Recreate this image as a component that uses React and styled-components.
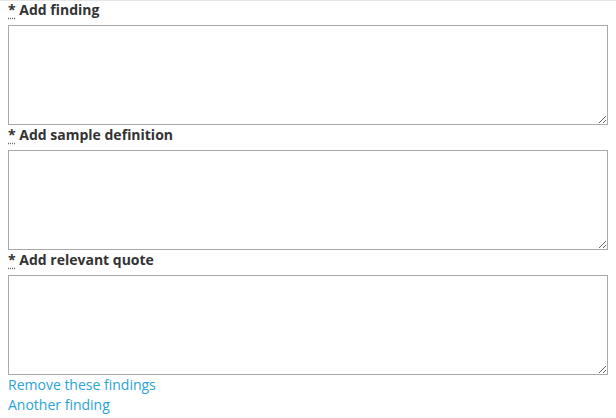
import styled, { createGlobalStyle } from "styled-components";

const Global = createGlobalStyle`
    body {
        margin: 0;
        background: #ffffff;
        font-family: "Open Sans", "Liberation Sans", sans-serif;
    }
`

// a linha fina no topo fica fora do fluxo
const Form = styled.form`
    box-shadow: inset 0 1px 0 #e6e6e6;
    padding: 0 8px;
`

const Campo = styled.div`
    display: flex;
    flex-direction: column;
`

const Rotulo = styled.label`
    font-size: 14px;
    line-height: 20px;
    font-weight: 700;
    color: #333333;
    margin-bottom: 5px;
`

const Obrigatorio = styled.abbr`
    text-decoration: underline dotted #666666;
    text-underline-offset: 3px;
    border: none;
    cursor: help;
`

const AreaTexto = styled.textarea`
    display: block;
    box-sizing: border-box;
    width: 600px;
    height: 100px;
    margin: 0;
    border: 1px solid #a9a9a9;
    border-radius: 0;
    font-family: inherit;
    font-size: 14px;
    resize: both;
`

const Links = styled.div`
    display: flex;
    flex-direction: column;
    align-items: flex-start;
`

const LinkAcao = styled.a`
    font-size: 14px;
    line-height: 20px;
    color: #29a3d8;
    text-decoration: none;
    cursor: pointer;
`

const campos = [
    { id: "finding", rotulo: "Add finding" },
    { id: "sample", rotulo: "Add sample definition" },
    { id: "quote", rotulo: "Add relevant quote" },
]

const App = () => {
    return (
        <>
            <Global />
            <Form onSubmit={(e) => e.preventDefault()}>
                {campos.map((c) => (
                    <Campo key={c.id}>
                        <Rotulo htmlFor={c.id}>
                            <Obrigatorio title="required">*</Obrigatorio> {c.rotulo}
                        </Rotulo>
                        <AreaTexto id={c.id} />
                    </Campo>
                ))}
                <Links>
                    <LinkAcao href="#">Remove these findings</LinkAcao>
                    <LinkAcao href="#">Another finding</LinkAcao>
                </Links>
            </Form>
        </>
    )
}

export default App;
